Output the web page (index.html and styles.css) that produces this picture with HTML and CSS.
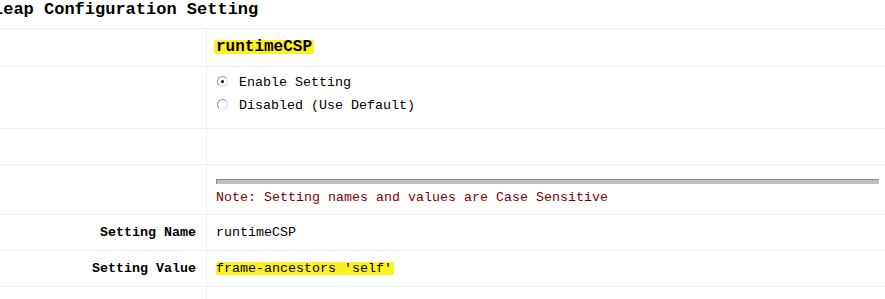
FILE: index.html
```html
<!DOCTYPE html>
<html>
<head>
<meta charset="utf-8">
<link rel="stylesheet" href="styles.css">
</head>
<body>
<div class="title">Leap Configuration Setting</div>
<div class="table">
  <div class="row r1">
    <div class="label"></div>
    <div class="value"><span class="hl big">runtimeCSP</span></div>
  </div>
  <div class="row r2">
    <div class="label"></div>
    <div class="value radios">
      <div class="opt"><span class="radio checked"></span><span>Enable Setting</span></div>
      <div class="opt"><span class="radio"></span><span>Disabled (Use Default)</span></div>
    </div>
  </div>
  <div class="row r3">
    <div class="label"></div>
    <div class="value"></div>
  </div>
  <div class="row r4">
    <div class="label"></div>
    <div class="value notecell">
      <div class="rule"></div>
      <div class="note">Note: Setting names and values are Case Sensitive</div>
    </div>
  </div>
  <div class="row r5">
    <div class="label">Setting Name</div>
    <div class="value">runtimeCSP</div>
  </div>
  <div class="row r6">
    <div class="label">Setting Value</div>
    <div class="value"><span class="hl">frame-ancestors 'self'</span></div>
  </div>
  <div class="row r7">
    <div class="label"></div>
    <div class="value"></div>
  </div>
</div>
</body>
</html>
```
FILE: styles.css
```css
html, body {
  margin: 0;
  padding: 0;
  background: #fff;
  overflow: hidden;
}
body {
  font-family: "Liberation Mono", "Courier New", monospace;
  font-size: 13.33px;
  color: #000;
}
.title {
  font-weight: bold;
  font-size: 17px;
  line-height: 19px;
  height: 28px;
  margin-left: -7px;
  white-space: nowrap;
}
.table {
  width: 885px;
}
.row {
  display: flex;
  border-top: 1px solid #efefef;
}
.label {
  width: 196px;
  flex: none;
  padding-right: 10px;
  border-right: 1px solid #efefef;
  text-align: right;
  font-weight: bold;
  display: flex;
  align-items: center;
  justify-content: flex-end;
}
.value {
  flex: 1;
  padding-left: 9px;
  padding-right: 6px;
  display: flex;
  align-items: center;
}
.r1 { height: 37px; }
.r2 { height: 61px; }
.r3 { height: 35px; }
.r4 { height: 49px; }
.r5 { height: 35px; }
.r6 { height: 35px; }
.r7 { height: 14px; }
.hl {
  background: #fff01f;
  line-height: 13px;
  padding: 0 2px 0 0;
  border-radius: 2px;
}
.hl.big {
  font-size: 16px;
  font-weight: bold;
  line-height: 14px;
  margin-left: -2px;
  padding-left: 2px;
  margin-top: -1px;
}
.radios {
  flex-direction: column;
  align-items: flex-start;
  justify-content: flex-start;
  padding-top: 4px;
}
.opt {
  display: flex;
  align-items: center;
  height: 23px;
}
.radio {
  width: 9px;
  height: 9px;
  border-radius: 50%;
  border: 1px solid #909090;
  border-right-color: #dcdcdc;
  border-bottom-color: #dcdcdc;
  background: #fff;
  margin-left: 1px;
  margin-right: 11px;
  position: relative;
  margin-top: -3px;
}
.radio.checked::after {
  content: "";
  position: absolute;
  left: 3px;
  top: 3px;
  width: 3px;
  height: 3px;
  border-radius: 50%;
  background: #000;
}
.notecell {
  flex-direction: column;
  align-items: stretch;
  justify-content: flex-start;
  padding-top: 14px;
}
.rule {
  height: 4px;
  background: #c0c0c0;
  border-top: 1px solid #8c8c8c;
  border-left: 1px solid #8c8c8c;
}
.note {
  color: #800000;
  font-weight: normal;
  margin-top: 6px;
  line-height: 15px;
}
```
